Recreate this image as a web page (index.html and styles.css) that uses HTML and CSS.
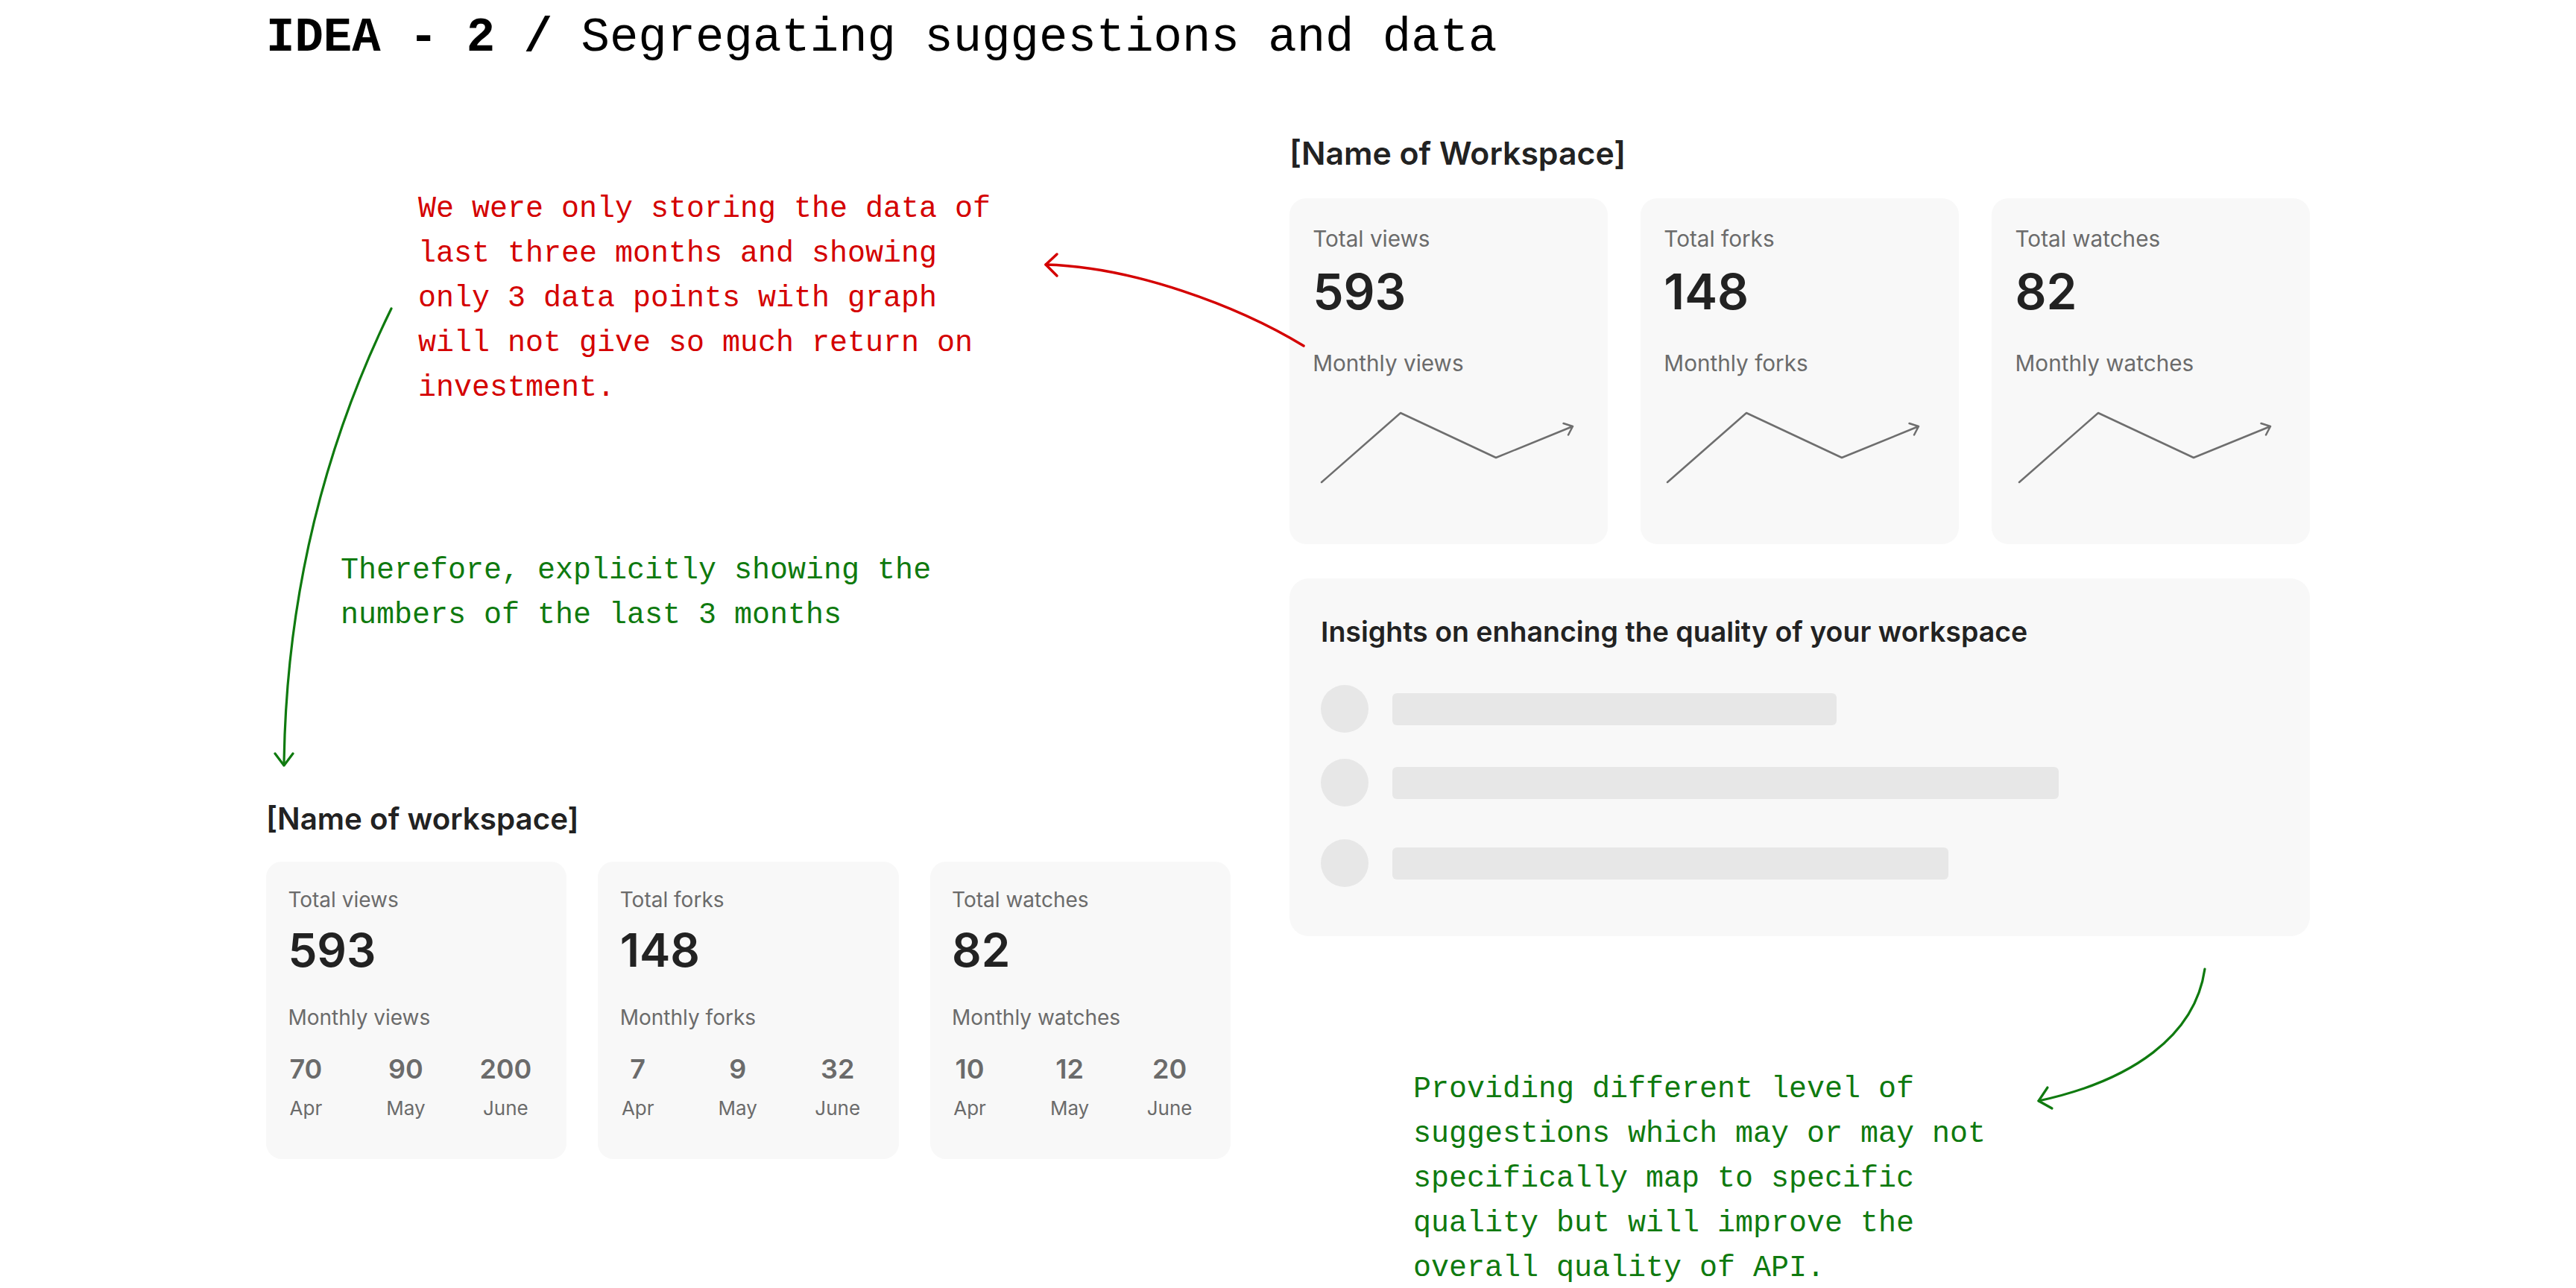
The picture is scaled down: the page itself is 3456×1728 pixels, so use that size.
FILE: index.html
```html
<!DOCTYPE html>
<html lang="en">
<head>
<meta charset="utf-8">
<title>IDEA - 2 / Segregating suggestions and data</title>
<link rel="stylesheet" href="styles.css">
</head>
<body>
<main class="board">
  <h1 class="title"><strong>IDEA - 2 /</strong> Segregating suggestions and data</h1>
  <div class="columns">
    <section class="col col-left">
      <p class="note note-red">We were only storing the data of last three months and showing only 3 data points with graph will not give so much return on investment.</p>
      <p class="note note-green note-therefore">Therefore, explicitly showing the numbers of the last 3 months</p>
      <div class="dash">
        <h2 class="dash-title">[Name of workspace]</h2>
        <div class="cards">
          <article class="card">
            <div class="label">Total views</div>
            <div class="big">593</div>
            <div class="label sub">Monthly views</div>
            <div class="months">
              <div class="month"><span class="m-val">70</span><span class="m-name">Apr</span></div>
              <div class="month"><span class="m-val">90</span><span class="m-name">May</span></div>
              <div class="month"><span class="m-val">200</span><span class="m-name">June</span></div>
            </div>
          </article>
          <article class="card">
            <div class="label">Total forks</div>
            <div class="big">148</div>
            <div class="label sub">Monthly forks</div>
            <div class="months">
              <div class="month"><span class="m-val">7</span><span class="m-name">Apr</span></div>
              <div class="month"><span class="m-val">9</span><span class="m-name">May</span></div>
              <div class="month"><span class="m-val">32</span><span class="m-name">June</span></div>
            </div>
          </article>
          <article class="card">
            <div class="label">Total watches</div>
            <div class="big">82</div>
            <div class="label sub">Monthly watches</div>
            <div class="months">
              <div class="month"><span class="m-val">10</span><span class="m-name">Apr</span></div>
              <div class="month"><span class="m-val">12</span><span class="m-name">May</span></div>
              <div class="month"><span class="m-val">20</span><span class="m-name">June</span></div>
            </div>
          </article>
        </div>
      </div>
    </section>

    <section class="col col-right">
      <div class="dash dash-lg">
        <h2 class="dash-title">[Name of Workspace]</h2>
        <div class="cards">
          <article class="card">
            <div class="label">Total views</div>
            <div class="big">593</div>
            <div class="label sub">Monthly views</div>
            <svg class="spark" width="350" height="115" viewBox="0 0 350 115"><path d="M12 108 L118 15 L246 75 L349 33 M336.6 29 L349 33 L343 44.5"/></svg>
          </article>
          <article class="card">
            <div class="label">Total forks</div>
            <div class="big">148</div>
            <div class="label sub">Monthly forks</div>
            <svg class="spark" width="350" height="115" viewBox="0 0 350 115"><path d="M12 108 L118 15 L246 75 L349 33 M336.6 29 L349 33 L343 44.5"/></svg>
          </article>
          <article class="card">
            <div class="label">Total watches</div>
            <div class="big">82</div>
            <div class="label sub">Monthly watches</div>
            <svg class="spark" width="350" height="115" viewBox="0 0 350 115"><path d="M12 108 L118 15 L246 75 L349 33 M336.6 29 L349 33 L343 44.5"/></svg>
          </article>
        </div>
      </div>

      <div class="insights">
        <h3 class="insights-title">Insights on enhancing the quality of your workspace</h3>
        <div class="skeleton">
          <div class="sk-row"><span class="sk-dot"></span><span class="sk-bar" style="width:596px"></span></div>
          <div class="sk-row"><span class="sk-dot"></span><span class="sk-bar" style="width:894px"></span></div>
          <div class="sk-row"><span class="sk-dot"></span><span class="sk-bar" style="width:746px"></span></div>
        </div>
      </div>

      <p class="note note-green note-provide">Providing different level of suggestions which may or may not specifically map to specific quality but will improve the overall quality of API.</p>
    </section>
  </div>
</main>

<svg class="arrows" width="3456" height="1728" viewBox="0 0 3456 1728" aria-hidden="true">
  <g class="arrow-red">
    <path d="M1749 464 C1660 410 1520 358 1403 355"/>
    <path d="M1418 341 L1403 355 L1418 370"/>
  </g>
  <g class="arrow-green">
    <path d="M525 414 Q385 700 381 1026"/>
    <path d="M369 1011 L381 1027 L393 1011"/>
    <path d="M2958 1300 C2945 1390 2860 1450 2735 1477"/>
    <path d="M2747 1459 L2735 1477 L2753 1487"/>
  </g>
</svg>
</body>
</html>
```

FILE: styles.css
```css
* {
  box-sizing: border-box;
  margin: 0;
  padding: 0;
}

html,
body {
  background: #ffffff;
}

body {
  position: relative;
  width: 3456px;
  height: 1728px;
  overflow: hidden;
  font-family: Inter, "Noto Sans", sans-serif;
  color: #222222;
}

.board {
  padding: 13px 0 0 357px;
}

.title {
  font-family: "Liberation Mono", "DejaVu Sans Mono", monospace;
  font-size: 64px;
  line-height: 76px;
  font-weight: 400;
  color: #000000;
  white-space: nowrap;
}

.title strong {
  font-weight: 700;
}

.columns {
  display: flex;
  align-items: flex-start;
  gap: 79px;
}

.col {
  flex: none;
}

.col-left {
  width: 1294px;
  padding-top: 162px;
}

.col-right {
  width: 1369px;
  padding-top: 92px;
}

/* handwritten-style annotations */
.note {
  font-family: "Liberation Mono", "DejaVu Sans Mono", monospace;
  font-size: 40px;
  line-height: 60px;
  width: 32.5ch;
}

.note-red {
  color: #d40000;
  margin-left: 204px;
}

.note-green {
  color: #0f7a0f;
}

.note-therefore {
  width: 33.5ch;
  margin-left: 100px;
  margin-top: 185px;
}

.note-provide {
  margin-left: 166px;
  margin-top: 176px;
}

/* dashboard blocks */
.dash {
  font-size: 28px;
  margin-top: 220px;
}

.dash-lg {
  font-size: 29.7px;
  margin-top: 0;
}

.dash-title {
  font-size: 1.44em;
  line-height: 1.15;
  font-weight: 600;
  color: #222222;
  margin-bottom: 0.84em;
}

.cards {
  display: grid;
  grid-template-columns: repeat(3, minmax(0, 1fr));
  gap: 1.5em;
}

.card {
  min-width: 0;
  background: #f8f8f8;
  border-radius: 0.75em;
  padding: 1.2em 1.05em 1.9em;
}

.dash-lg .card {
  padding-bottom: 76px;
}

.label {
  font-size: 1em;
  line-height: 1.214;
  color: #6b6b6b;
}

.big {
  font-size: 2.214em;
  line-height: 1.21;
  font-weight: 600;
  color: #222222;
  margin-top: 0.21em;
}

.sub {
  margin-top: 1.286em;
}

.months {
  display: grid;
  grid-template-columns: repeat(3, 48px);
  column-gap: 86px;
  margin-top: 30px;
}

.month {
  display: flex;
  flex-direction: column;
  align-items: center;
  color: #6b6b6b;
}

.m-val {
  font-size: 36px;
  line-height: 44px;
  font-weight: 600;
  white-space: nowrap;
}

.m-name {
  font-size: 26px;
  line-height: 31px;
  margin-top: 15px;
  white-space: nowrap;
}

.spark {
  display: block;
  margin-top: 34px;
  overflow: visible;
}

.card + .card .spark {
  margin-left: -7px;
}

.spark path {
  fill: none;
  stroke: #6e6e6e;
  stroke-width: 2.5;
  stroke-linecap: round;
  stroke-linejoin: round;
}

/* insights card */
.insights {
  margin-top: 46px;
  background: #f8f8f8;
  border-radius: 26px;
  padding: 49px 42px 66px;
}

.insights-title {
  font-size: 37.5px;
  line-height: 45px;
  font-weight: 600;
  color: #222222;
}

.skeleton {
  display: flex;
  flex-direction: column;
  margin-top: 49px;
}

.sk-row {
  display: flex;
  align-items: center;
  gap: 32px;
}

.sk-row + .sk-row {
  margin-top: 35px;
}

.sk-row:nth-child(3) {
  margin-top: 44px;
}

.sk-dot {
  flex: none;
  width: 64px;
  height: 64px;
  border-radius: 50%;
  background: #e7e7e7;
}

.sk-bar {
  height: 43px;
  border-radius: 6px;
  background: #e7e7e7;
}

/* annotation arrows overlay */
.arrows {
  position: absolute;
  left: 0;
  top: 0;
  pointer-events: none;
}

.arrows path {
  fill: none;
  stroke-linecap: round;
  stroke-linejoin: round;
}

.arrow-red path {
  stroke: #d40000;
  stroke-width: 3.5;
}

.arrow-green path {
  stroke: #0f7a0f;
  stroke-width: 3.2;
}
```
